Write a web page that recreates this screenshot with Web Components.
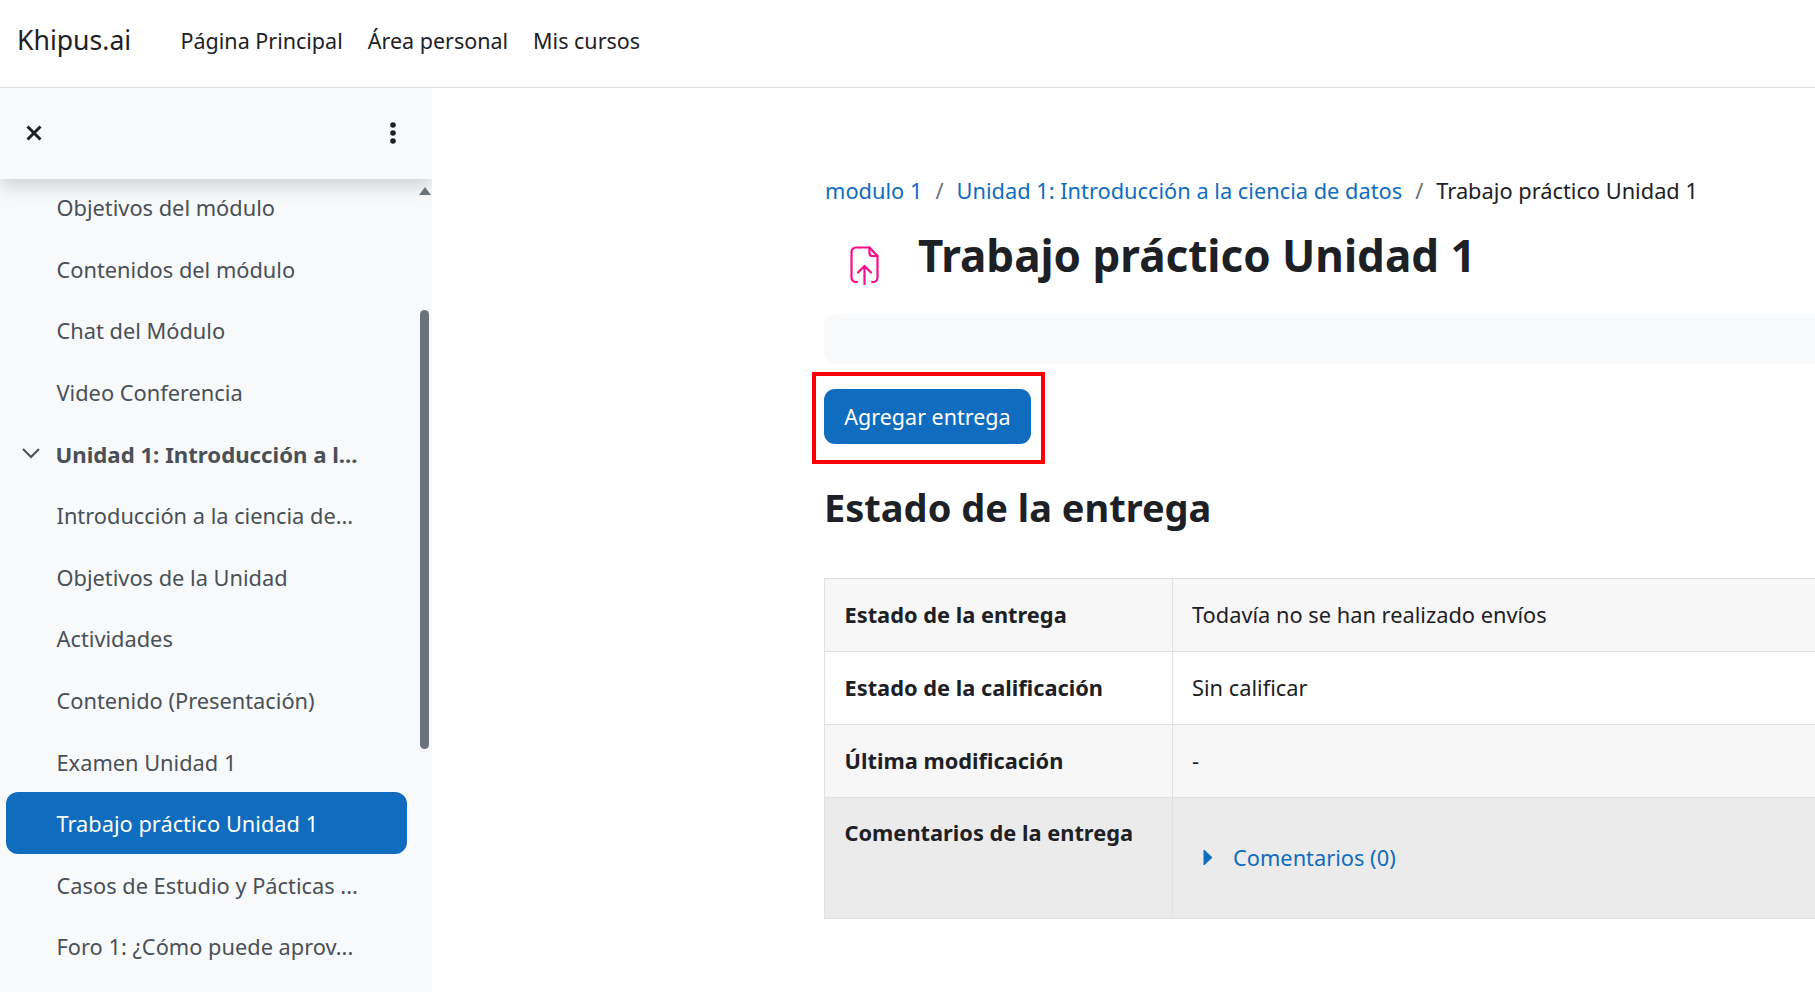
<!DOCTYPE html>
<html lang="es">
<head>
<meta charset="utf-8">
<title>Trabajo práctico Unidad 1</title>
<style>
  html, body { margin: 0; height: 100%; overflow: hidden; background: #fff; }
  body { font-family: "Noto Sans", "Open Sans", sans-serif; color: #1d2125; }
  .page { display: flex; height: 904px; }
</style>
</head>
<body>
<top-nav brand="Khipus.ai">
  <a>Página Principal</a><a>Área personal</a><a>Mis cursos</a>
</top-nav>
<div class="page">
  <course-index>
    <index-item>Objetivos del módulo</index-item>
    <index-item>Contenidos del módulo</index-item>
    <index-item>Chat del Módulo</index-item>
    <index-item>Video Conferencia</index-item>
    <index-item section>Unidad 1: Introducción a l...</index-item>
    <index-item>Introducción a la ciencia de...</index-item>
    <index-item>Objetivos de la Unidad</index-item>
    <index-item>Actividades</index-item>
    <index-item>Contenido (Presentación)</index-item>
    <index-item>Examen Unidad 1</index-item>
    <index-item active>Trabajo práctico Unidad 1</index-item>
    <index-item>Casos de Estudio y Pácticas ...</index-item>
    <index-item>Foro 1: ¿Cómo puede aprov...</index-item>
  </course-index>
  <main-content>
    <bread-crumbs current="Trabajo práctico Unidad 1">
      <a>modulo 1</a><a>Unidad 1: Introducción a la ciencia de datos</a>
    </bread-crumbs>
    <page-title>Trabajo práctico Unidad 1</page-title>
    <activity-bar></activity-bar>
    <submit-action>Agregar entrega</submit-action>
    <section-heading>Estado de la entrega</section-heading>
    <status-table>
      <status-row label="Estado de la entrega" tone="odd">Todavía no se han realizado envíos</status-row>
      <status-row label="Estado de la calificación">Sin calificar</status-row>
      <status-row label="Última modificación" tone="odd" >-</status-row>
      <status-row label="Comentarios de la entrega" tone="hover" tall><comment-toggle>Comentarios (0)</comment-toggle></status-row>
    </status-table>
  </main-content>
</div>

<script>
const FONT_SIZE = '21.8px';

function shadow(el, html) {
  el.attachShadow({ mode: 'open' }).innerHTML = html;
}

class TopNav extends HTMLElement {
  constructor() {
    super();
    shadow(this, `
      <style>
        :host { display: flex; align-items: center; box-sizing: border-box; height: 88px; padding-bottom: 7px; border-bottom: 1px solid #dee2e6; background: #fff; }
        .brand { font-size: 26.6px; margin-left: 17px; width: 163.500px; color: #1d2125; }
        nav { display: flex; gap: 25px; font-size: 21.500px; }
        ::slotted(a) { color: #1d2125; }
      </style>
      <span class="brand">${this.getAttribute('brand')}</span>
      <nav><slot></slot></nav>`);
  }
}

class CourseIndex extends HTMLElement {
  constructor() {
    super();
    shadow(this, `
      <style>
        :host { display: flex; flex-direction: column; flex: 0 0 432px; height: 904px; background: #f8f9fa; position: relative; overflow: hidden; }
        header { flex: 0 0 91px; box-sizing: border-box; display: flex; align-items: center; justify-content: space-between; padding: 0 36px 2px 25px; background: #f8f9fa; box-shadow: 0 8px 16px rgba(0,0,0,.15); position: relative; z-index: 1; }
        svg { display: block; }
        .list { display: flex; flex-direction: column; margin-top: -3px; }
        .up { position: absolute; left: 419px; top: 99px; width: 0; height: 0; border: 6px solid transparent; border-top: 0; border-bottom: 8px solid #6a737b; z-index: 2; }
        .thumb { position: absolute; left: 420px; top: 222px; width: 9px; height: 439px; background: #6a737b; border-radius: 5px; }
      </style>
      <header>
        <svg width="18" height="18" viewBox="0 0 18 18"><path d="M2.500 2.500l13 13M15.500 2.500l-13 13" stroke="#1d2125" stroke-width="3" fill="none"/></svg>
        <svg width="6" height="22" viewBox="0 0 6 22"><circle cx="3" cy="3" r="2.8" fill="#1d2125"/><circle cx="3" cy="11" r="2.8" fill="#1d2125"/><circle cx="3" cy="19" r="2.8" fill="#1d2125"/></svg>
      </header>
      <div class="list"><slot></slot></div>
      <span class="up"></span>
      <span class="thumb"></span>`);
  }
}

class IndexItem extends HTMLElement {
  constructor() {
    super();
    const chevron = this.hasAttribute('section')
      ? '<svg width="20" height="12" viewBox="0 0 20 12"><path d="M2 2l8 8 8-8" stroke="#495057" stroke-width="2" fill="none"/></svg>'
      : '';
    shadow(this, `
      <style>
        :host { display: flex; align-items: center; box-sizing: border-box; height: 61.6px; margin: 0 25px 0 6px; padding: 2px 0 0 50.500px; border-radius: 12px; color: #495057; font-size: ${FONT_SIZE}; white-space: nowrap; position: relative; }
        :host([active]) { background: #0f6cbf; color: #fff; }
        :host([section]) { font-weight: 700; padding-left: 49.500px; font-size: 22.200px; }
        svg { position: absolute; left: 15px; top: 25px; }
      </style>
      ${chevron}<slot></slot>`);
  }
}

class MainContent extends HTMLElement {
  constructor() {
    super();
    shadow(this, `
      <style>
        :host { display: flex; flex-direction: column; flex: 1; min-width: 0; padding: 0 0 0 392px; overflow: hidden; }
      </style>
      <slot></slot>`);
  }
}

class BreadCrumbs extends HTMLElement {
  constructor() {
    super();
    shadow(this, `
      <style>
        :host { display: flex; align-items: center; margin-top: 84px; height: 36px; padding-left: 1px; font-size: ${FONT_SIZE}; white-space: nowrap; }
        nav { display: flex; }
        ::slotted(a) { color: #0f6cbf; }
        ::slotted(a)::after { content: "/"; color: #6a737b; padding: 0 13px; }
      </style>
      <nav><slot></slot></nav>
      <span>${this.getAttribute('current')}</span>`);
  }
}

class PageTitle extends HTMLElement {
  constructor() {
    super();
    shadow(this, `
      <style>
        :host { display: flex; align-items: center; height: 70px; margin-top: 12px; font-size: 44px; font-weight: 700; white-space: nowrap; }
        svg { margin-left: 26px; margin-right: 39px; margin-top: 20px; flex: none; }
        h1 { margin: 0; font: inherit; }
      </style>
      <svg width="29" height="39" viewBox="0 0 29 39" fill="none" stroke="#f90c8b" stroke-width="2.2" stroke-linecap="round" stroke-linejoin="round">
        <path d="M7 36H6a4.5 4.5 0 0 1-4.5-4.5V6A4.5 4.5 0 0 1 6 1.5h13.5L27.5 10v21.500A4.500 4.500 0 0 1 23 36h-1"/>
        <path d="M19.500 1.500V7a3 3 0 0 0 3 3h5"/>
        <path d="M14.500 38V20M8 26.500l6.500-6.500 6.500 6.500"/>
      </svg>
      <h1><slot></slot></h1>`);
  }
}

class ActivityBar extends HTMLElement {
  constructor() {
    super();
    shadow(this, `
      <style>
        :host { display: block; height: 50px; margin-top: 24px; margin-right: -20px; background: #f8f9fa; border-radius: 12px; }
      </style>`);
  }
}

class SubmitAction extends HTMLElement {
  constructor() {
    super();
    shadow(this, `
      <style>
        :host { display: block; margin-top: 25px; height: 55px; }
        .wrap { position: relative; display: inline-block; }
        button { display: block; box-sizing: border-box; width: 207px; height: 55px; padding: 0; border: 0; border-radius: 11px; background: #0f6cbf; color: #fff; font: inherit; font-size: 21.500px; }
        .mark { position: absolute; left: -12px; top: -17px; width: 233px; height: 92px; box-sizing: border-box; border: 4.500px solid #fe0000; }
      </style>
      <div class="wrap"><button><slot></slot></button><span class="mark"></span></div>`);
  }
}

class SectionHeading extends HTMLElement {
  constructor() {
    super();
    shadow(this, `
      <style>
        :host { display: flex; align-items: center; height: 64px; margin-top: 31px; font-size: 38px; font-weight: 700; white-space: nowrap; }
        h2 { margin: 0; font: inherit; }
      </style>
      <h2><slot></slot></h2>`);
  }
}

class StatusTable extends HTMLElement {
  constructor() {
    super();
    shadow(this, `
      <style>
        :host { display: flex; flex-direction: column; margin-top: 39px; margin-right: -20px; border: solid #dee2e6; border-width: 1px 1px 1px 1px; }
      </style>
      <slot></slot>`);
  }
}

class StatusRow extends HTMLElement {
  constructor() {
    super();
    shadow(this, `
      <style>
        :host { display: grid; grid-template-columns: 348px 1fr; height: 72px; border-bottom: 1px solid #dee2e6; font-size: ${FONT_SIZE}; background: #fff; }
        :host(:last-child) { border-bottom: 0; }
        :host([tone="odd"]) { background: #f7f7f7; }
        :host([tone="hover"]) { background: #ebebeb; height: 120px; }
        .label { display: flex; align-items: center; padding: 0 0 2px 19.500px; font-weight: 700; border-right: 1px solid #dee2e6; background: #f7f7f7; }
        :host(:not([tone])) .label { background: #fff; }
        :host([tone="hover"]) .label { background: #ebebeb; align-items: flex-start; padding-top: 20px; padding-bottom: 0; height: 100px; }
        .value { display: flex; align-items: center; padding: 0 0 2px 19px; }
      </style>
      <div class="label">${this.getAttribute('label')}</div>
      <div class="value"><slot></slot></div>`);
  }
}

class CommentToggle extends HTMLElement {
  constructor() {
    super();
    shadow(this, `
      <style>
        :host { display: flex; align-items: center; gap: 20px; padding-left: 11px; color: #0f6cbf; }
        svg { flex: none; }
      </style>
      <svg width="10" height="17" viewBox="0 0 10 17"><path d="M1 1l8 7.500-8 7.500z" fill="#0f6cbf" stroke="#0f6cbf" stroke-linejoin="round"/></svg>
      <span><slot></slot></span>`);
  }
}

customElements.define('top-nav', TopNav);
customElements.define('course-index', CourseIndex);
customElements.define('index-item', IndexItem);
customElements.define('main-content', MainContent);
customElements.define('bread-crumbs', BreadCrumbs);
customElements.define('page-title', PageTitle);
customElements.define('activity-bar', ActivityBar);
customElements.define('submit-action', SubmitAction);
customElements.define('section-heading', SectionHeading);
customElements.define('status-table', StatusTable);
customElements.define('status-row', StatusRow);
customElements.define('comment-toggle', CommentToggle);
</script>
</body>
</html>
